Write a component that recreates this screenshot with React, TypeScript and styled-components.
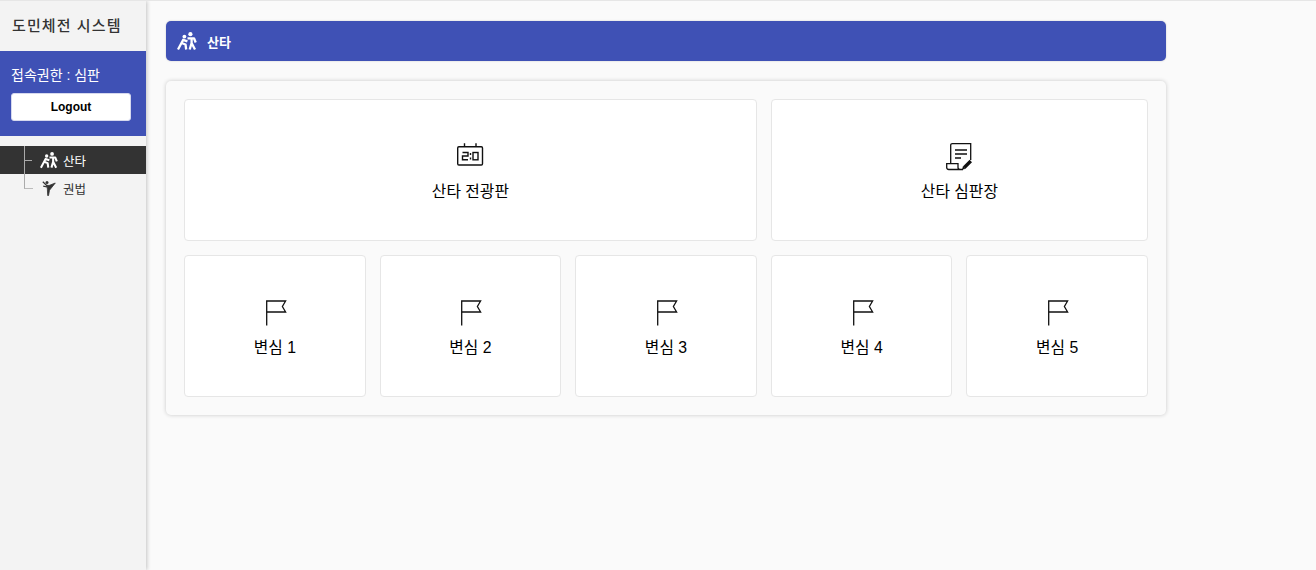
import styled, { createGlobalStyle } from 'styled-components';

const GlobalStyle = createGlobalStyle`
  html, body {
    margin: 0;
    padding: 0;
    height: 100%;
    background: #fafafa;
    font-family: "Liberation Sans", "Noto Sans CJK KR", sans-serif;
  }
  #root {
    height: 100%;
  }
`;

const Page = styled.div`
  display: flex;
  height: 570px;
  overflow: hidden;
  box-sizing: border-box;
  border-top: 1px solid #e6e6e6;
`;

const Sidebar = styled.aside`
  width: 146px;
  flex-shrink: 0;
  background: #f3f3f3;
  box-shadow: 1px 0 4px rgba(0, 0, 0, 0.22);
`;

const Brand = styled.h1`
  margin: 0;
  height: 50px;
  padding: 0 0 3px 12px;
  box-sizing: border-box;
  display: flex;
  align-items: center;
  font-size: 15px;
  font-weight: 500;
  letter-spacing: 1.1px;
  color: #333;
`;

const UserBox = styled.div`
  height: 85px;
  box-sizing: border-box;
  padding: 15px 15px 0 11px;
  background: #3f51b5;
  color: #fff;
`;

const UserRole = styled.div`
  font-size: 14px;
  line-height: 18px;
`;

const LogoutButton = styled.button`
  display: block;
  width: 120px;
  height: 28px;
  margin-top: 9px;
  padding: 0;
  background: #fff;
  border: 1px solid #d5d8ee;
  border-radius: 3px;
  font-family: inherit;
  font-size: 12px;
  font-weight: 700;
  color: #000;
`;

const Menu = styled.ul`
  list-style: none;
  margin: 10px 0 0;
  padding: 0;
`;

const MenuItem = styled.li<{ $active?: boolean; $last?: boolean }>`
  position: relative;
  display: flex;
  align-items: center;
  height: 28px;
  padding-left: 40px;
  font-size: 12.5px;
  background: ${p => (p.$active ? '#333' : 'transparent')};
  color: ${p => (p.$active ? '#fff' : '#333')};

  &::before {
    content: "";
    position: absolute;
    left: 24px;
    top: 0;
    width: 8px;
    height: ${p => (p.$last ? '14px' : '28px')};
    border-left: 1px solid #aaa;
    border-bottom: ${p => (p.$last ? '1px solid #bbb' : 'none')};
  }

  &::after {
    content: "";
    display: ${p => (p.$last ? 'none' : 'block')};
    position: absolute;
    left: 25px;
    top: 14px;
    width: 7px;
    border-top: 1px solid #aaa;
  }
`;

const MenuIcon = styled.span`
  display: flex;
  justify-content: center;
  width: 18px;
  margin-right: 5px;
`;

const Main = styled.main`
  width: 1000px;
  margin-left: 20px;
  padding-top: 20px;
`;

const Header = styled.header`
  display: flex;
  align-items: center;
  gap: 10px;
  height: 40px;
  padding-left: 11px;
  background: #3f51b5;
  border-radius: 5px;
  box-shadow: 0 0 2px rgba(0, 0, 0, 0.2);
  color: #fff;
  font-size: 13px;
  font-weight: 700;
`;

const Panel = styled.section`
  display: grid;
  grid-template-columns: repeat(5, 1fr);
  gap: 14px;
  margin-top: 20px;
  padding: 18px;
  background: #fafafa;
  border-radius: 5px;
  box-shadow: 0 0 4px rgba(0, 0, 0, 0.2);
`;

const Card = styled.a<{ $span: number }>`
  grid-column: span ${p => p.$span};
  height: 142px;
  box-sizing: border-box;
  display: flex;
  flex-direction: column;
  align-items: center;
  justify-content: center;
  gap: 9px;
  padding-top: 5px;
  background: #fff;
  border: 1px solid #e6e6e6;
  border-radius: 4px;
  color: #000;
  font-size: 15.8px;
  line-height: 20px;
`;

const IconSlot = styled.span`
  display: flex;
  align-items: flex-start;
  height: 30px;
`;

const WrestleIcon = ({ size = 20 }: { size?: number }) => (
  <svg width={size} height={size} viewBox="0 0 20 18" fill="none" stroke="currentColor" strokeWidth="2.3" strokeLinejoin="round">
    <circle cx="13.400" cy="2.200" r="2.100" fill="currentColor" stroke="none" />
    <circle cx="7.400" cy="4.600" r="1.900" fill="currentColor" stroke="none" />
    <path d="M10.500 6.300H17L18.700 10.500" />
    <path d="M14.600 6.500V11L12.700 17.500M14.600 11 18 17.500" />
    <path d="M1 17.500 4.600 10.800 6.200 7.800 10.400 9.300" />
    <path d="M4.600 11 8.500 12.500 9.200 17.500" />
  </svg>
);

const KickIcon = () => (
  <svg width="14" height="16" viewBox="0 0 14 16" fill="currentColor" stroke="currentColor" strokeLinejoin="round">
    <circle cx="5" cy="2.600" r="1.500" stroke="none" />
    <path d="M5 5.200 7 5.500 13.300 3 7.500 10.200 6.500 15.600 5.700 15.600 5.400 9.500Z" strokeWidth="0.8" />
    <path d="M.8 1.800 5.200 6M1.200 6.200 5.200 7" fill="none" strokeWidth="1.2" />
  </svg>
);

const ScoreboardIcon = () => (
  <svg width="28" height="24" viewBox="0 0 28 24" fill="none" stroke="#111" strokeWidth="1.4">
    <rect x="1.700" y="3.700" width="24.800" height="18.300" rx="1.200" />
    <path d="M8.500 .3v3.400M20 .3v3.400" />
    <path d="M6.500 9.500H12V13H6.500V16.800H12" />
    <rect x="17" y="9.500" width="5" height="7.300" />
    <path d="M14.500 10v2M14.500 14.500v2" />
  </svg>
);

const ScoreSheetIcon = () => (
  <svg width="28" height="30" viewBox="0 0 28 30" fill="none" stroke="#111" strokeWidth="1.3">
    <path d="M5.700 20V2.200C5.700 1.200 6.300 .7 7.400 .7H25.700V17" />
    <path d="M10 7h12M10 11h12M10 15h6" />
    <path d="M15.500 26.500H3.800C2.300 26.500 1.700 25.500 1.700 24.500V20.700H13V24.500C13 25.700 13.800 26.500 15.500 26.500H18" />
    <path d="M18.300 25.500 25.800 18" stroke="#fff" strokeWidth="5.400" />
    <path d="M19.300 24.500 25.800 18" strokeWidth="3.400" />
    <path d="M17.300 26.500 18.200 23.300 20.300 25.500Z" fill="#111" strokeWidth="0.400" />
  </svg>
);

const FlagIcon = () => (
  <svg width="24" height="27" viewBox="0 0 24 27" fill="none" stroke="#111" strokeWidth="1.300">
    <path d="M3.700 26.500V2H22.600L19.400 7.500 22.600 13H3.700" />
  </svg>
);

const JUDGES = [1, 2, 3, 4, 5];

export default function App() {
  return (
    <Page>
      <GlobalStyle />
      <Sidebar>
        <Brand>도민체전 시스템</Brand>
        <UserBox>
          <UserRole>접속권한 : 심판</UserRole>
          <LogoutButton>Logout</LogoutButton>
        </UserBox>
        <Menu>
          <MenuItem $active>
            <MenuIcon>
              <WrestleIcon size={18} />
            </MenuIcon>
            산타
          </MenuItem>
          <MenuItem $last>
            <MenuIcon>
              <KickIcon />
            </MenuIcon>
            권법
          </MenuItem>
        </Menu>
      </Sidebar>
      <Main>
        <Header>
          <WrestleIcon />
          산타
        </Header>
        <Panel>
          <Card $span={3}>
            <IconSlot>
              <ScoreboardIcon />
            </IconSlot>
            산타 전광판
          </Card>
          <Card $span={2}>
            <IconSlot>
              <ScoreSheetIcon />
            </IconSlot>
            산타 심판장
          </Card>
          {JUDGES.map(n => (
            <Card $span={1} key={n}>
              <IconSlot>
                <FlagIcon />
              </IconSlot>
              변심 {n}
            </Card>
          ))}
        </Panel>
      </Main>
    </Page>
  );
}
